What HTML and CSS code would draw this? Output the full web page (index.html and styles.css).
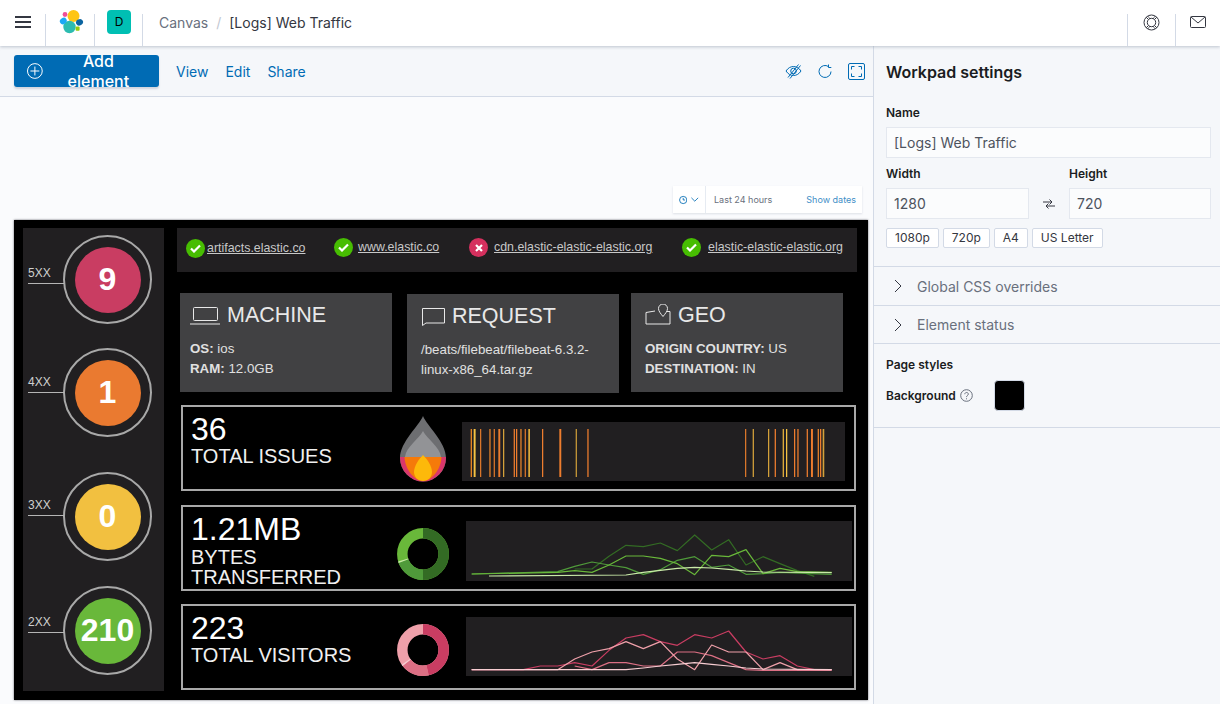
FILE: index.html
```html
<!doctype html>
<html lang="en">
<head>
<meta charset="utf-8">
<title>[Logs] Web Traffic - Canvas</title>
<link rel="stylesheet" href="styles.css">
</head>
<body>

<header class="topbar">
	<div class="topCell cellMenu">
		<svg width="16" height="12" viewBox="0 0 16 12"><path d="M0 1h16M0 6h16M0 11h16" stroke="#343741" stroke-width="2"/></svg>
	</div>
	<div class="topCell cellLogo">
		<svg width="26" height="26" viewBox="0 0 26 26">
			<circle cx="15.5" cy="8" r="6" fill="#fec514"/>
			<circle cx="11.5" cy="19" r="6.2" fill="#2cbcb0"/>
			<circle cx="7" cy="6.5" r="2.4" fill="#f04e98"/>
			<ellipse cx="5.3" cy="13" rx="3.6" ry="3" fill="#1ba9f5" transform="rotate(-35 5.3 13)"/>
			<ellipse cx="21.5" cy="14.3" rx="3.6" ry="3.1" fill="#0b64a0" transform="rotate(-30 21.5 14.3)"/>
			<rect x="17.6" y="18.6" width="4" height="4.2" rx="1" fill="#93c90e"/>
		</svg>
	</div>
	<div class="topCell cellSpace"><span class="spaceBadge">D</span></div>
	<nav class="crumbs"><span class="crumbParent">Canvas</span><span class="crumbSlash">/</span><span class="crumbNow">[Logs] Web Traffic</span></nav>
	<div class="topCell cellRight">
		<svg width="17" height="17" viewBox="0 0 17 17" fill="none" stroke="#343741"><circle cx="8.5" cy="8.5" r="7.5"/><circle cx="8.5" cy="8.5" r="4.2"/><path d="M3.2 3.2l2.3 2.3M13.8 3.2l-2.3 2.3M3.2 13.8l2.3-2.3M13.8 13.8l-2.3-2.3"/><path d="M5 2l1.8 2.9M12 2l-1.8 2.9M5 15l1.8-2.9M12 15l-1.8-2.9" stroke-width=".7"/></svg>
	</div>
	<div class="topCell cellRight cellMail">
		<svg width="16" height="12" viewBox="0 0 16 12" fill="none" stroke="#343741"><rect x=".5" y=".5" width="15" height="11" rx="1"/><path d="M1 1l7 6 7-6"/></svg>
	</div>
</header>

<div class="main">

	<div class="stage">

		<div class="toolbar">
			<button class="addBtn">
				<svg width="16" height="16" viewBox="0 0 16 16" fill="none" stroke="#fff"><circle cx="8" cy="8" r="7.5"/><path d="M8 3.5v9M3.5 8h9"/></svg>
				Add element
			</button>
			<a class="toolLink">View</a>
			<a class="toolLink">Edit</a>
			<a class="toolLink">Share</a>
			<div class="toolIcons">
				<svg width="17" height="16" viewBox="0 0 17 16" fill="none" stroke="#006bb4"><path d="M1 8c2-3 4.500-4.500 7.500-4.500S14 5 16 8c-2 3-4.500 4.500-7.500 4.500S3 11 1 8z"/><circle cx="8.500" cy="8" r="2.800"/><path d="M3 14.500L13.500 1.500M5 15.500L15.500 2.500"/></svg>
				<svg width="14" height="15" viewBox="0 0 14 15" fill="none" stroke="#006bb4"><path d="M10.500 2.600A6 6 0 1 0 13 7.500"/><path d="M10.500 .5v3h2.800"/></svg>
				<span class="fullBtn">
					<svg width="11" height="11" viewBox="0 0 11 11" fill="none" stroke="#006bb4"><path d="M.5 3.500v-3h3M7.500 .5h3v3M10.500 7.500v3h-3M3.500 10.500h-3v-3"/></svg>
				</span>
			</div>
		</div>

		<div class="canvasArea">

			<div class="timeFilter">
				<div class="timeIcons">
					<svg width="10" height="10" viewBox="0 0 10 10" fill="none" stroke="#006bb4"><circle cx="5" cy="5" r="4.300"/><path d="M5 2.500V5h2.200"/></svg>
					<svg width="9" height="5" viewBox="0 0 9 5" fill="none" stroke="#006bb4"><path d="M.5 .5l4 4 4-4"/></svg>
				</div>
				<span class="timeText">Last 24 hours</span>
				<span class="timeDates">Show dates</span>
			</div>

			<div class="workpad">

				<div class="codes"></div>

				<div class="ring ring5"><div class="dot dotRed">9</div></div>
				<div class="ring ring4"><div class="dot dotOrange">1</div></div>
				<div class="ring ring3"><div class="dot dotYellow">0</div></div>
				<div class="ring ring2"><div class="dot dotGreen">210</div></div>

				<div class="codeLabel label5">5XX</div>
				<div class="codeLabel label4">4XX</div>
				<div class="codeLabel label3">3XX</div>
				<div class="codeLabel label2">2XX</div>

				<div class="statusBar">
					<span class="statusIcon stat1 ok"><svg width="11" height="9" viewBox="0 0 11 9" fill="none" stroke="#fff" stroke-width="2.200"><path d="M1 4.500l3 3 6-6"/></svg></span>
					<span class="statusText text1">artifacts.elastic.co</span>
					<span class="statusIcon stat2 ok"><svg width="11" height="9" viewBox="0 0 11 9" fill="none" stroke="#fff" stroke-width="2.200"><path d="M1 4.500l3 3 6-6"/></svg></span>
					<span class="statusText text2">www.elastic.co</span>
					<span class="statusIcon stat3 bad"><svg width="8" height="8" viewBox="0 0 8 8" fill="none" stroke="#fff" stroke-width="2.200"><path d="M1 1l6 6M7 1L1 7"/></svg></span>
					<span class="statusText text3">cdn.elastic-elastic-elastic.org</span>
					<span class="statusIcon stat4 ok"><svg width="11" height="9" viewBox="0 0 11 9" fill="none" stroke="#fff" stroke-width="2.200"><path d="M1 4.500l3 3 6-6"/></svg></span>
					<span class="statusText text4">elastic-elastic-elastic.org</span>
				</div>

				<div class="infoCard cardMachine">
					<div class="cardHead">
						<svg width="30" height="18" viewBox="0 0 30 18" fill="none" stroke="#e8e8e8"><rect x="3.500" y=".5" width="24" height="13" rx="1"/><path d="M0 17h30"/></svg>
						<span class="cardTitle">MACHINE</span>
					</div>
					<p class="cardBody"><b>OS:</b> ios<br><b>RAM:</b> 12.0GB</p>
				</div>

				<div class="infoCard cardRequest">
					<div class="cardHead">
						<svg width="24" height="18" viewBox="0 0 24 18" fill="none" stroke="#e8e8e8"><path d="M1.500 17.500V.5h22v14.500H5z"/></svg>
						<span class="cardTitle">REQUEST</span>
					</div>
					<p class="cardBody"><b class="semi">/beats/filebeat/filebeat-6.3.2-</b><br><b class="semi">linux-x86_64.tar.gz</b></p>
				</div>

				<div class="infoCard cardGeo">
					<div class="cardHead">
						<svg width="26" height="21" viewBox="0 0 26 21" fill="none" stroke="#e8e8e8"><path d="M10 7L1 8.500V20h24V7.500h-3"/><path d="M18 12.500c-2.500-3-4.500-5.500-4.500-8a4.500 4.500 0 0 1 9 0c0 2.500-2 5-4.500 8z"/></svg>
						<span class="cardTitle">GEO</span>
					</div>
					<p class="cardBody"><b>ORIGIN COUNTRY:</b> US<br><b>DESTINATION:</b> IN</p>
				</div>

				<div class="statBox boxIssues">
					<div class="statNum">36</div>
					<div class="statName">TOTAL ISSUES</div>
				</div>
				<svg class="flame" width="48" height="66" viewBox="0 0 48 66">
					<path d="M24 0C20 10 1 26 1 42a23 23.500 0 0 0 46 0C47 26 28 10 24 0z" fill="#6d6e71"/>
					<path d="M24 15C20 23 7 31 6 41h36C41 31 28 23 24 15z" fill="#929396"/>
					<path d="M1 41h46a23 24.500 0 0 1-46 0z" fill="#d9376b"/>
					<path d="M5.500 41h37C42 53 33 65 24 65S6 53 5.500 41z" fill="#f57a0a"/>
					<path d="M24 39c-4 4-9 11-9 17 0 5 4 9 9 9s9-4 9-9c0-6-5-13-9-17z" fill="#fdb90a"/>
				</svg>
				<div class="chartBg bgIssues">
					<svg width="383" height="59" viewBox="0 0 383 59" id="barChart"></svg>
				</div>

				<div class="statBox boxBytes">
					<div class="statNum">1.21MB</div>
					<div class="statName tight">BYTES<br>TRANSFERRED</div>
				</div>
				<svg class="donut donutBytes" width="52" height="52" viewBox="0 0 52 52" fill="none" stroke-width="10.500">
					<circle cx="26" cy="26" r="20.700" pathLength="100" stroke="#69b83a"/>
					<circle cx="26" cy="26" r="20.700" pathLength="100" stroke="#336b24" stroke-dasharray="50 50" transform="rotate(-90 26 26)"/>
					<circle cx="26" cy="26" r="20.700" pathLength="100" stroke="#4f9a3a" stroke-dasharray="19.500 80.500" transform="rotate(90 26 26)"/>
					<circle cx="26" cy="26" r="20.700" pathLength="100" stroke="#c9eaa8" stroke-dasharray="1 99" transform="rotate(160 26 26)"/>
				</svg>
				<div class="chartBg bgBytes">
					<svg width="386" height="60" viewBox="48 64 1158 180" fill="none" stroke-width="3.600" stroke-linejoin="round">
						<polyline stroke="#336b24" points="374,208 426,208 477,170 528,137 580,141 631,130 682,153 734,106 785,151 836,120 888,196 939,171 990,192 1042,213 1093,230"/>
						<polyline stroke="#4f9a3a" points="65,223 323,216 374,200 426,187 477,196 528,204 580,224 631,210 682,182 734,171 785,203 836,196 888,224 939,222 990,218 1145,224"/>
						<polyline stroke="#69b83a" points="65,223 323,218 374,213 426,218 477,196 528,169 580,169 631,176 682,192 734,225 785,167 836,171 888,150 939,222 990,206 1042,216 1145,218"/>
						<polyline stroke="#c9eaa8" points="117,229 528,226 580,218 631,212 682,206 734,203 785,205 836,209 888,214 939,217 1145,219"/>
					</svg>
				</div>

				<div class="statBox boxVisitors">
					<div class="statNum">223</div>
					<div class="statName">TOTAL VISITORS</div>
				</div>
				<svg class="donut donutVisitors" width="52" height="52" viewBox="0 0 52 52" fill="none" stroke-width="10.500">
					<circle cx="26" cy="26" r="20.700" pathLength="100" stroke="#efa0aa"/>
					<circle cx="26" cy="26" r="20.700" pathLength="100" stroke="#c93d62" stroke-dasharray="46.500 53.500" transform="rotate(-90 26 26)"/>
					<circle cx="26" cy="26" r="20.700" pathLength="100" stroke="#dc6f84" stroke-dasharray="18 82" transform="rotate(77 26 26)"/>
					<circle cx="26" cy="26" r="20.700" pathLength="100" stroke="#f7cdd2" stroke-dasharray="1 99" transform="rotate(142 26 26)"/>
				</svg>
				<div class="chartBg bgVisitors">
					<svg width="386" height="59" viewBox="48 350 1158 177" fill="none" stroke-width="3.600" stroke-linejoin="round">
						<polyline stroke="#c93d62" points="65,508 220,508 271,497 323,497 374,487 426,497 477,450 528,413 580,403 631,424 682,435 734,403 785,413 836,392 888,455 939,476 990,466 1042,497 1093,508 1145,508"/>
						<polyline stroke="#dc6f84" points="374,497 426,508 477,487 528,487 580,497 631,497 682,455 734,455 785,466 836,487 888,508 939,510 1145,510"/>
						<polyline stroke="#efa0aa" points="65,508 323,508 374,476 426,455 477,445 528,424 580,445 631,424 682,476 734,508 785,434 836,455 888,455 939,508 990,487 1042,508 1145,508"/>
						<polyline stroke="#f7cdd2" points="65,508 528,508 580,503 631,497 682,492 734,487 785,492 836,497 888,503 939,506 1145,508"/>
					</svg>
				</div>

			</div>
		</div>
	</div>

	<aside class="sidebar">

		<section class="sideTop">
			<h2 class="sideTitle">Workpad settings</h2>
			<label class="fieldLabel">Name</label>
			<div class="field">[Logs] Web Traffic</div>
			<div class="sizeRow">
				<div class="sizeCol">
					<label class="fieldLabel">Width</label>
					<div class="field">1280</div>
				</div>
				<svg class="swapIcon" width="14" height="14" viewBox="0 0 14 14" fill="none" stroke="#343741"><path d="M1 5h9M7.500 2.500L10 5 7.500 7.500M13 9H4M6.500 6.500L4 9l2.500 2.500"/></svg>
				<div class="sizeCol">
					<label class="fieldLabel">Height</label>
					<div class="field">720</div>
				</div>
			</div>
			<div class="presets">
				<span class="preset">1080p</span>
				<span class="preset">720p</span>
				<span class="preset">A4</span>
				<span class="preset">US Letter</span>
			</div>
		</section>

		<div class="accordion acc1">
			<svg width="8" height="14" viewBox="0 0 8 14" fill="none" stroke="#343741"><path d="M1 1l6 6-6 6"/></svg>
			<span>Global CSS overrides</span>
		</div>
		<div class="accordion acc2">
			<svg width="8" height="14" viewBox="0 0 8 14" fill="none" stroke="#343741"><path d="M1 1l6 6-6 6"/></svg>
			<span>Element status</span>
		</div>

		<section class="pageStyles">
			<h3 class="fieldLabel">Page styles</h3>
			<div class="bgRow">
				<span class="bgLabel">Background</span>
				<svg width="13" height="13" viewBox="0 0 13 13" fill="none" stroke="#69707d"><circle cx="6.500" cy="6.500" r="5.800"/><path d="M4.800 5.200c0-2.300 3.500-2.300 3.500-.1 0 1.500-1.800 1.400-1.800 3"/><path d="M6.500 9.300v1"/></svg>
				<span class="swatch"></span>
			</div>
		</section>

	</aside>
</div>

<script>

	// orange bars of the issues chart, x in zoomed px
	var bars = [ [ 122, 2, '#f08a24' ], [ 131, 4, '#f5c242' ], [ 150, 2, '#d9762a' ], [ 178, 2, '#e8832a' ], [ 191, 2, '#d9762a' ], [ 205, 4, '#ed7d2e' ], [ 219, 2, '#d4a13a' ],
		[ 251, 2, '#ed7d2e' ], [ 258, 2, '#ed7d2e' ], [ 271, 2, '#e8832a' ], [ 284, 2, '#d9762a' ], [ 295, 3, '#e8b23c' ], [ 336, 2, '#ed7d2e' ], [ 388, 4, '#ed7d2e' ], [ 437, 2, '#c99a38' ], [ 472, 2, '#ed7d2e' ],
		[ 945, 2, '#d9762a' ], [ 968, 2, '#d4a13a' ], [ 1014, 2, '#d4a13a' ], [ 1034, 2, '#ed7d2e' ], [ 1058, 2, '#e8b23c' ], [ 1068, 2, '#f5c242' ], [ 1092, 2, '#ed7d2e' ], [ 1102, 2, '#ed7d2e' ],
		[ 1130, 2, '#ed7d2e' ], [ 1143, 4, '#ed7d2e' ], [ 1163, 2, '#e8832a' ], [ 1170, 2, '#ed7d2e' ], [ 1178, 3, '#d4a13a' ] ];

	var html = '';

	for ( var bar of bars ) {

		html += '<rect x="' + ( bar[ 0 ] / 3 + 430 - 462 ) + '" y="7" width="' + ( bar[ 1 ] / 3 + 0.6 ) + '" height="48" fill="' + bar[ 2 ] + '"/>';

	}

	document.getElementById( 'barChart' ).innerHTML = html;

</script>
</body>
</html>
```

FILE: styles.css
```css
html, body { height: 100%; margin: 0; overflow: hidden; }
body { background-color: #fff; color: #343741; display: flex; flex-direction: column; font: 14px Inter, "Noto Sans", sans-serif; }
h2, h3, p { margin: 0; }

.topbar { align-items: stretch; background-color: #fff; box-shadow: 0 1px 3px rgba(152,162,179,.6); display: flex; flex: none; height: 46px; position: relative; z-index: 2; }
.topCell { align-items: flex-start; display: flex; justify-content: center; padding-top: 10px; box-sizing: border-box; position: relative; }
.topCell::after { background-color: #d3dae6; bottom: 0; content: ""; position: absolute; right: 0; top: 14px; width: 1px; }
.cellMenu { padding-top: 16px; width: 46px; }
.cellLogo { padding-top: 8px; width: 49px; }
.cellSpace { width: 48px; }
.spaceBadge { background-color: #00bfb3; border-radius: 4px; color: #000; display: block; font-size: 12px; height: 24px; line-height: 24px; text-align: center; width: 24px; }
.crumbs { align-items: center; display: flex; flex: 1; height: 44px; padding-left: 16px; }
.crumbParent { color: #69707d; }
.crumbSlash { color: #c2c8d2; margin: 0 8px; }
.crumbNow { color: #343741; }
.cellRight { padding-top: 14px; width: 48px; }
.cellRight::after { left: 0; right: auto; }
.cellMail { padding-top: 16px; width: 45px; }

.main { display: flex; flex: 1; min-height: 0; }
.stage { display: flex; flex: 1; flex-direction: column; min-width: 0; }

.toolbar { align-items: center; background-color: #f5f7fa; border-bottom: 1px solid #d3dae6; box-sizing: border-box; display: flex; flex: none; gap: 17px; height: 51px; padding: 0 14px 0 14px; }
.addBtn { align-items: center; background-color: #006bb4; border: 0; border-radius: 3px; box-shadow: 0 2px 2px rgba(152,162,179,.4); color: #fff; display: flex; font: 500 16px Inter, sans-serif; gap: 8px; height: 32px; margin-right: 0; padding: 0 13px; width: 145px; }
.toolLink { color: #006bb4; }
.toolIcons { align-items: center; display: flex; gap: 16px; margin-left: auto; margin-right: -6px; }
.fullBtn { align-items: center; border: 1px solid #006bb4; border-radius: 2px; display: flex; height: 15px; justify-content: center; width: 15px; }

.canvasArea { background-color: #fafbfd; flex: 1; position: relative; }

.timeFilter { align-items: center; background-color: #fff; box-shadow: 0 1px 2px rgba(152,162,179,.3); display: flex; font-size: 9px; height: 27px; left: 673px; position: absolute; top: 89px; width: 189px; }
.timeIcons { align-items: center; border-right: 1px solid #e6ebf2; display: flex; gap: 4px; height: 100%; padding: 0 6px; width: 33px; box-sizing: border-box; }
.timeText { color: #69707d; margin-left: 8px; }
.timeDates { color: #3f8fc7; margin-left: auto; margin-right: 6px; }

.workpad { background-color: #000; box-shadow: 0 0 2px rgba(60,60,70,.8); color: #fff; font-family: "Liberation Sans", Arial, sans-serif; height: 480px; left: 14px; overflow: hidden; position: absolute; top: 123px; width: 854px; }

.codes { background-color: #211f21; height: 463px; left: 9px; position: absolute; top: 8px; width: 141px; }

.ring { align-items: center; border: 2px solid #a8a8a8; border-radius: 50%; box-sizing: border-box; display: flex; height: 89px; justify-content: center; left: 49px; position: absolute; width: 89px; }
.ring5 { top: 15px; }
.ring4 { top: 128px; }
.ring3 { top: 252px; }
.ring2 { top: 366px; }
.dot { align-items: center; border-radius: 50%; display: flex; font-size: 32px; font-weight: 700; height: 66px; justify-content: center; width: 66px; }
.dotRed { background-color: #c93d62; }
.dotOrange { background-color: #ea7a30; }
.dotYellow { background-color: #f2c040; }
.dotGreen { background-color: #69b83a; }

.codeLabel { border-bottom: 1px solid #b5b5b5; box-sizing: border-box; color: #cfcfcf; font-size: 12px; height: 18px; left: 14px; line-height: 14px; position: absolute; width: 36px; }
.label5 { top: 46px; }
.label4 { top: 155px; }
.label3 { top: 278px; }
.label2 { top: 395px; }

.statusBar { background-color: #211f21; height: 44px; left: 163px; position: absolute; top: 8px; width: 680px; }
.statusIcon { align-items: center; border-radius: 50%; display: flex; height: 19px; justify-content: center; position: absolute; top: 10px; width: 19px; }
.ok { background-color: #47bd02; }
.bad { background-color: #d5305e; }
.stat1 { left: 9px; top: 11px; }
.stat2 { left: 157px; }
.stat3 { left: 292px; }
.stat4 { left: 505px; }
.statusText { color: #c8c8c8; font-size: 12.4px; line-height: 19px; position: absolute; text-decoration: underline; top: 10px; }
.text1 { left: 30px; top: 11px; }
.text2 { left: 181px; }
.text3 { left: 317px; }
.text4 { left: 531px; }

.infoCard { background-color: #414143; box-sizing: border-box; height: 99px; padding: 12px 10px 0; position: absolute; width: 212px; }
.cardMachine { left: 166px; top: 73px; }
.cardRequest { left: 393px; top: 74px; padding-left: 14px; }
.cardGeo { left: 617px; top: 73px; padding-left: 14px; width: 212px; }
.cardHead { align-items: flex-end; display: flex; gap: 7px; height: 20px; }
.cardTitle { color: #e8e8e8; font-size: 21.500px; line-height: 20px; }
.cardBody { color: #e0e0e0; font-size: 13.300px; line-height: 20px; margin-top: 14px; }
.cardBody .semi { font-weight: 400; }

.statBox { border: 2px solid #a8a8a8; box-sizing: border-box; height: 86px; left: 167px; padding: 5px 8px 0; position: absolute; width: 675px; }
.boxIssues { top: 185px; }
.boxBytes { top: 285px; }
.boxVisitors { top: 384px; }
.statNum { font-size: 32px; line-height: 34px; }
.statName { color: #f0f0f0; font-size: 20px; line-height: 20px; margin-top: 0; }
.tight { margin-top: 1px; }

.flame { left: 385px; position: absolute; top: 196px; }
.donut { left: 383px; position: absolute; }
.donutBytes { top: 308px; }
.donutVisitors { top: 404px; }

.chartBg { background-color: #211f21; position: absolute; }
.chartBg svg { display: block; }
.bgIssues { height: 59px; left: 448px; top: 202px; width: 383px; }
.bgBytes { height: 60px; left: 452px; top: 301px; width: 386px; }
.bgVisitors { height: 59px; left: 452px; top: 397px; width: 386px; }

.sidebar { background-color: #f5f7fa; border-left: 1px solid #d3dae6; box-sizing: border-box; flex: none; width: 347px; }
.sideTop { border-bottom: 1px solid #d3dae6; box-sizing: border-box; height: 221px; padding: 16px 9px 0 12px; }
.sideTitle { color: #1a1c21; font-size: 16px; font-weight: 600; line-height: 20px; margin-bottom: 24px; }
.fieldLabel { color: #1a1c21; display: block; font-size: 12px; font-weight: 600; line-height: 14px; margin-bottom: 7px; }
.field { background-color: #fbfcfd; box-shadow: 0 0 0 1px #e4e8ef inset; box-sizing: border-box; color: #4d535e; height: 31px; line-height: 31px; padding: 0 8px; }
.sideTop > .field { margin-bottom: 9px; }
.sizeRow { align-items: flex-end; display: flex; }
.sizeCol { width: 143px; }
.swapIcon { flex: none; margin: 0 13px 8px 13px; width: 14px; }
.sizeCol:last-child { flex: 1; width: auto; }
.presets { display: flex; gap: 4px; margin-top: 9px; }
.preset { background-color: #fff; border: 1px solid #d3dae6; border-radius: 2px; box-sizing: border-box; color: #343741; font-size: 12px; height: 20px; line-height: 18px; padding: 0 8px; }

.accordion { align-items: center; border-bottom: 1px solid #d3dae6; box-sizing: border-box; color: #69707d; display: flex; gap: 15px; height: 39px; padding-left: 20px; }
.acc2 { height: 38px; }

.pageStyles { border-bottom: 1px solid #d3dae6; box-sizing: border-box; height: 84px; padding: 14px 12px 0; }
.pageStyles .fieldLabel { margin-bottom: 8px; }
.bgRow { align-items: center; display: flex; height: 30px; }
.bgLabel { color: #1a1c21; font-size: 12px; font-weight: 600; margin-right: 4px; }
.swatch { background-color: #000; border: 1px solid #d3dae6; border-radius: 4px; box-sizing: border-box; height: 31px; margin-left: 21px; width: 31px; }
```
